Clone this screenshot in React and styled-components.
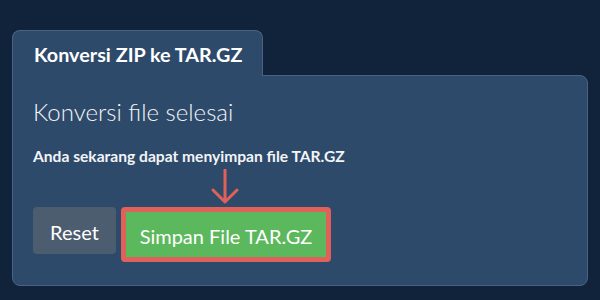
import React from 'react'
import styled, { createGlobalStyle } from 'styled-components'

const Global = createGlobalStyle`
  html, body {
    margin: 0;
    padding: 0;
    background: #11233a;
    font-family: Lato, "Open Sans", sans-serif;
    color: #fff;
  }
`

const Page = styled.div`
  width: 600px;
  height: 300px;
  box-sizing: border-box;
  padding: 30px 12px 0 12px;
  background: #11233a;
`

const Tabs = styled.div`
  display: flex;
  align-items: flex-end;
`

const Tab = styled.div`
  height: 46px;
  box-sizing: border-box;
  padding: 0 20px 0 21px;
  display: flex;
  align-items: center;
  background: #2e4a6a;
  border: 1px solid #4a6384;
  border-bottom: none;
  border-radius: 8px 8px 0 0;
  font-size: 19.8px;
  font-weight: 700;
  margin-bottom: -1px;
  position: relative;
  z-index: 1;
`

const Panel = styled.div`
  width: 576px;
  height: 211px;
  box-sizing: border-box;
  background: #2e4a6a;
  border: 1px solid #4a6384;
  border-radius: 0 8px 8px 8px;
  padding: 21px 20px;
  position: relative;
`

const Heading = styled.h2`
  margin: 0;
  font-size: 24px;
  font-weight: 300;
  line-height: 29px;
  color: #f2f4f7;
`

const Note = styled.p`
  margin: 21px 0 0 0;
  font-size: 15.6px;
  font-weight: 700;
  line-height: 18px;
  color: #f2f4f7;
`

const Actions = styled.div`
  display: flex;
  align-items: flex-start;
  gap: 5px;
  margin-top: 42px;
  position: relative;
`

const Button = styled.button`
  font-family: Lato, "Open Sans", sans-serif;
  font-size: 20px;
  font-weight: 400;
  color: #fff;
  cursor: pointer;
  height: ${p => (p.$primary ? '55px' : '47px')};
  width: ${p => (p.$primary ? '210px' : '83px')};
  background: ${p => (p.$primary ? '#5cb85c' : '#4d5d70')};
  border-radius: 4px;
  box-sizing: border-box;
  border: ${p => (p.$primary ? '5px solid #e0605a' : 'none')};
  padding: 2px 0 0 0;
`

const Arrow = styled.svg`
  position: absolute;
  left: 178px;
  top: -38px;
  width: 28px;
  height: 36px;
`

export default function App() {
  return (
    <>
      <Global />
      <Page>
        <Tabs>
          <Tab>Konversi ZIP ke TAR.GZ</Tab>
        </Tabs>
        <Panel>
          <Heading>Konversi file selesai</Heading>
          <Note>Anda sekarang dapat menyimpan file TAR.GZ</Note>
          <Actions>
            <Button>Reset</Button>
            <Button $primary>Simpan File TAR.GZ</Button>
            <Arrow viewBox="0 0 28 36">
              <path d="M14 1 V33 M2 21 L14 33 L26 21" fill="none" stroke="#e0605a" strokeWidth="3" strokeLinecap="round" strokeLinejoin="round" />
            </Arrow>
          </Actions>
        </Panel>
      </Page>
    </>
  )
}
